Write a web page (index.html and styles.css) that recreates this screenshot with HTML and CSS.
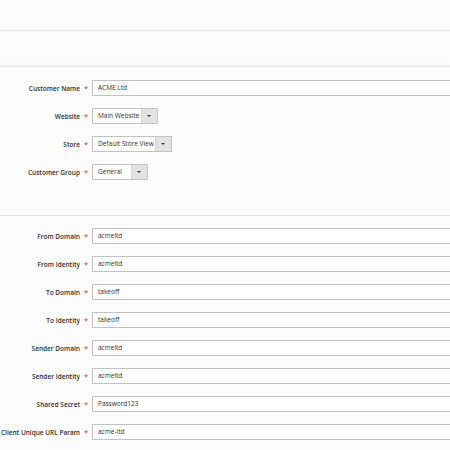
FILE: index.html
```html
<!DOCTYPE html>
<html lang="en">
<head>
    <meta charset="UTF-8">
    <meta name="viewport" content="width=device-width, initial-scale=1.0">
    <title>Client Settings</title>
    <link rel="stylesheet" href="styles.css">
</head>
<body>
    <div class="page-header"></div>
    <div class="page-actions"></div>

    <div class="fieldset">
        <div class="field">
            <label>Customer Name</label>
            <span class="req">*</span>
            <div class="input">ACME Ltd</div>
        </div>
        <div class="field">
            <label>Website</label>
            <span class="req">*</span>
            <div class="select w-website">Main Website<span class="arrow"></span></div>
        </div>
        <div class="field">
            <label>Store</label>
            <span class="req">*</span>
            <div class="select w-store">Default Store View<span class="arrow"></span></div>
        </div>
        <div class="field">
            <label>Customer Group</label>
            <span class="req">*</span>
            <div class="select w-group">General<span class="arrow"></span></div>
        </div>
    </div>

    <div class="fieldset second">
        <div class="field">
            <label>From Domain</label>
            <span class="req">*</span>
            <div class="input">acmeltd</div>
        </div>
        <div class="field">
            <label>From Identity</label>
            <span class="req">*</span>
            <div class="input">acmeltd</div>
        </div>
        <div class="field">
            <label>To Domain</label>
            <span class="req">*</span>
            <div class="input">takeoff</div>
        </div>
        <div class="field">
            <label>To Identity</label>
            <span class="req">*</span>
            <div class="input">takeoff</div>
        </div>
        <div class="field">
            <label>Sender Domain</label>
            <span class="req">*</span>
            <div class="input">acmeltd</div>
        </div>
        <div class="field">
            <label>Sender Identity</label>
            <span class="req">*</span>
            <div class="input">acmeltd</div>
        </div>
        <div class="field">
            <label>Shared Secret</label>
            <span class="req">*</span>
            <div class="input">Password123</div>
        </div>
        <div class="field">
            <label>Client Unique URL Param</label>
            <span class="req">*</span>
            <div class="input">acme-ltd</div>
        </div>
    </div>
</body>
</html>
```

FILE: styles.css
```css
body {
    font-family: "Open Sans", Arial, sans-serif;
    background-color: #fcfcfc;
    color: #333;
    margin: 0;
    padding: 0;
    overflow: hidden;
}
.page-header {
    height: 30px;
    border-bottom: 1px solid #e3e3e3;
}
.page-actions {
    height: 35px;
    border-bottom: 1px solid #e3e3e3;
    box-shadow: inset 0 -4px 4px -3px rgba(0, 0, 0, 0.04);
}
.fieldset {
    padding-top: 13px;
    padding-bottom: 35px;
    border-bottom: 1px solid #e3e3e3;
    overflow: hidden;
}
.fieldset.second {
    padding-top: 12px;
    padding-bottom: 0;
    border-bottom: none;
}
.field {
    display: flex;
    align-items: center;
    height: 16px;
    margin-bottom: 12px;
}
.field:last-child {
    margin-bottom: 0;
}
.field > * {
    flex-shrink: 0;
}
.field label {
    width: 80px;
    text-align: right;
    white-space: nowrap;
    font-size: 6.5px;
    font-weight: 600;
    color: #303030;
}
.req {
    width: 12px;
    text-align: center;
    color: #e22626;
    font-size: 7.5px;
}
.input,
.select {
    box-sizing: border-box;
    height: 16px;
    border: 1px solid #c2c2c2;
    background-color: #fff;
    font-size: 6.5px;
    line-height: 14px;
    padding-left: 5px;
    color: #303030;
    white-space: nowrap;
}
.input {
    width: 400px;
}
.select {
    position: relative;
    padding-right: 15px;
}
.arrow {
    position: absolute;
    top: 0;
    right: 0;
    bottom: 0;
    width: 15px;
    background-color: #e3e3e3;
    border-left: 1px solid #d6d6d6;
}
.arrow::after {
    content: "";
    position: absolute;
    top: 6px;
    left: 5px;
    border-left: 2px solid transparent;
    border-right: 2px solid transparent;
    border-top: 2px solid #333;
}
.w-website { width: 66px; }
.w-store { width: 80px; }
.w-group { width: 56px; }
```
